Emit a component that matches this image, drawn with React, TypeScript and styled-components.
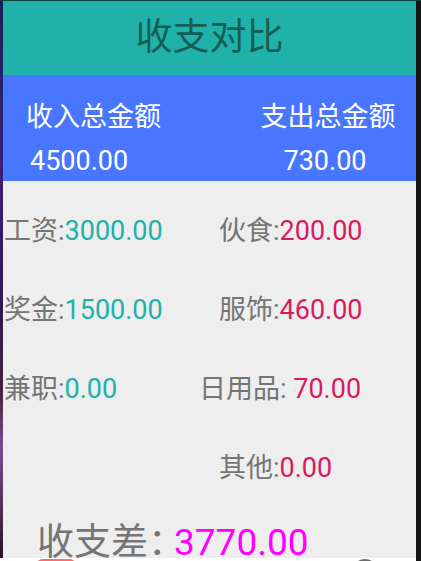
import React from "react";
import styled, { createGlobalStyle } from "styled-components";

const Global = createGlobalStyle`
  html, body { margin: 0; padding: 0; background: #141414; }
  body { width: 421px; height: 561px; overflow: hidden; }
  * { box-sizing: border-box; }
`;

const FONT = `Roboto, "Noto Sans CJK SC", sans-serif`;

const Screen = styled.div`
  width: 421px;
  height: 561px;
  display: flex;
  flex-direction: column;
  background: #141414;
  overflow: hidden;
`;

const TopEdge = styled.div`
  height: 1px;
  flex: none;
  background: #0f3f3a;
`;

const Middle = styled.div`
  display: flex;
  height: 557px;
  flex: none;
`;

const Wallpaper = styled.div`
  width: 3px;
  flex: none;
  background: linear-gradient(
    180deg,
    #1c1f55 0%,
    #2a2270 20%,
    #3a1f7a 30%,
    #2b1a50 55%,
    #4a2040 70%,
    #7a4a90 80%,
    #5a3060 90%,
    #2a1020 100%
  );
`;

const RightEdge = styled.div`
  width: 5px;
  flex: none;
  background: #141414;
`;

const AppWindow = styled.div`
  flex: 1;
  display: flex;
  flex-direction: column;
  background: #eeeeee;
  font-family: ${FONT};
  overflow: hidden;
`;

const Header = styled.header`
  height: 74px;
  flex: none;
  display: flex;
  align-items: center;
  justify-content: center;
  background: #20b2aa;
`;

const Title = styled.h1`
  margin: 0;
  font-size: 37px;
  font-weight: 400;
  line-height: 40px;
  color: #155e55;
`;

const TotalsBand = styled.section`
  height: 106px;
  flex: none;
  background: #4876ff;
  display: grid;
  grid-template-columns: 1fr 1fr;
  padding-top: 26px;
`;

const TotalCol = styled.div`
  display: flex;
  flex-direction: column;
  gap: 12px;
`;

const TotalText = styled.div<{ $indent: number }>`
  padding-left: ${(p) => p.$indent}px;
  font-size: 27px;
  line-height: 32px;
  color: #ffffff;
  white-space: nowrap;
`;

const Body = styled.section`
  flex: 1;
  display: flex;
  flex-direction: column;
  padding-top: 34px;
`;

const ItemGrid = styled.div`
  display: grid;
  grid-template-columns: 216px 1fr;
  row-gap: 47px;
`;

const Item = styled.div<{ $shift: number }>`
  margin-left: ${(p) => p.$shift}px;
  font-size: 27px;
  line-height: 32px;
  height: 32px;
  color: #757575;
  white-space: nowrap;
`;

const Amount = styled.span<{ $tone: "in" | "out" }>`
  color: ${(p) => (p.$tone === "in" ? "#20b2aa" : "#d81b60")};
`;

const Balance = styled.div`
  margin-top: 44px;
  padding-left: 34px;
  font-size: 37px;
  line-height: 30px;
  height: 30px;
  color: #757575;
  white-space: nowrap;
`;

const BalanceColon = styled.span`
  display: inline-block;
  vertical-align: top;
  width: 26px;
  height: 30px;
  line-height: 30px;
  overflow: hidden;
`;

const BalanceValue = styled.span`
  color: #ff00ff;
`;

const NavStrip = styled.div`
  height: 3px;
  flex: none;
  display: flex;
  background: #ffffff;
  overflow: hidden;
  margin-right: 5px;
`;

const NavPill = styled.div`
  margin-left: 35px;
  margin-top: 1px;
  width: 42px;
  height: 12px;
  border-radius: 8px 8px 0 0;
  background: #ff6b6b;
  flex: none;
`;

const NavDot = styled.div`
  margin-left: 275px;
  margin-top: 1px;
  width: 26px;
  height: 26px;
  border-radius: 50%;
  background: #6e6e6e;
  flex: none;
`;

type Entry = { label: string; value: string; tone: "in" | "out"; shift: number } | null;

const rows: [Entry, Entry][] = [
  [
    { label: "工资:", value: "3000.00", tone: "in", shift: 1 },
    { label: "伙食:", value: "200.00", tone: "out", shift: 0 },
  ],
  [
    { label: "奖金:", value: "1500.00", tone: "in", shift: 1 },
    { label: "服饰:", value: "460.00", tone: "out", shift: 0 },
  ],
  [
    { label: "兼职:", value: "0.00", tone: "in", shift: 1 },
    { label: "日用品: ", value: "70.00", tone: "out", shift: -20 },
  ],
  [null, { label: "其他:", value: "0.00", tone: "out", shift: 0 }],
];

export default function App() {
  return (
    <Screen>
      <Global />
      <TopEdge />
      <Middle>
        <Wallpaper />
        <AppWindow>
          <Header>
            <Title>收支对比</Title>
          </Header>
          <TotalsBand>
            <TotalCol>
              <TotalText $indent={23}>收入总金额</TotalText>
              <TotalText $indent={27}>4500.00</TotalText>
            </TotalCol>
            <TotalCol>
              <TotalText $indent={51}>支出总金额</TotalText>
              <TotalText $indent={74}>730.00</TotalText>
            </TotalCol>
          </TotalsBand>
          <Body>
            <ItemGrid>
              {rows.flatMap((row, ri) =>
                row.map((e, ci) =>
                  e ? (
                    <Item key={`${ri}-${ci}`} $shift={e.shift}>
                      {e.label}
                      <Amount $tone={e.tone}>{e.value}</Amount>
                    </Item>
                  ) : (
                    <Item key={`${ri}-${ci}`} $shift={0} />
                  )
                )
              )}
            </ItemGrid>
            <Balance>
              收支差<BalanceColon>：</BalanceColon>
              <BalanceValue>3770.00</BalanceValue>
            </Balance>
          </Body>
        </AppWindow>
        <RightEdge />
      </Middle>
      <NavStrip>
        <NavPill />
        <NavDot />
      </NavStrip>
    </Screen>
  );
}
